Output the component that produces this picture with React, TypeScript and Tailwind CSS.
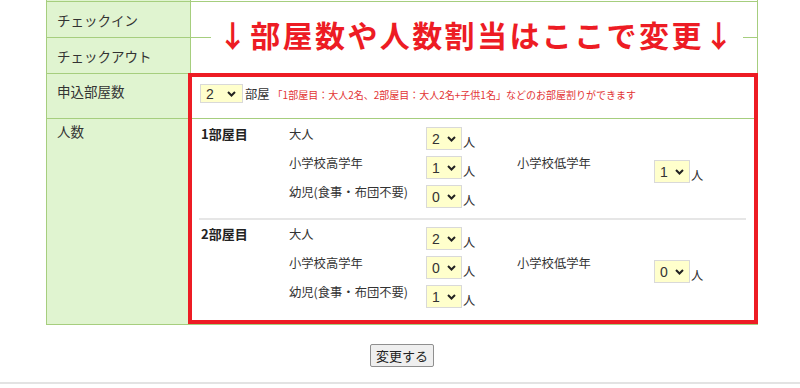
import React from "react";

const font = { fontFamily: '"Noto Sans CJK JP", "Noto Sans", sans-serif' };

type SelProps = { value: string; max: number; size: "room" | "small" };

const Sel: React.FC<SelProps> = ({ value, max, size }) => {
  const opts = Array.from({ length: max + 1 }, (_, i) => String(i));
  const box =
    size === "room"
      ? "w-[43px] h-[19px] pl-[5px]"
      : "w-[36px] h-[23px] pl-[5px]";
  const arrow = size === "room" ? "right-[7px]" : "right-[6px]";
  return (
    <span className="relative inline-flex shrink-0">
      <select
        defaultValue={value}
        className={`${box} appearance-none bg-[#ffffcc] border border-[#d9d9d9] text-[14px] leading-none text-[#333] outline-none`}
        style={{ fontFamily: '"Liberation Sans", Arial, sans-serif' }}
      >
        {opts.map((o) => (
          <option key={o} value={o}>
            {o}
          </option>
        ))}
      </select>
      <svg
        className={`pointer-events-none absolute top-1/2 -translate-y-1/2 ${arrow}`}
        width="9"
        height="6"
        viewBox="0 0 9 6"
      >
        <path d="M1 1 L4.5 4.5 L8 1" fill="none" stroke="#222" strokeWidth="2" />
      </svg>
    </span>
  );
};

interface RoomRow {
  label: string;
  value: string;
  extra?: { label: string; value: string };
}

const SelWithUnit: React.FC<{ value: string }> = ({ value }) => (
  <div className="flex items-end gap-[1px] mt-[2px]">
    <Sel value={value} max={9} size="small" />
    <span className="text-[12.3px] leading-[16px] text-[#333]">人</span>
  </div>
);

const RoomBlock: React.FC<{ title: string; rows: RoomRow[] }> = ({ title, rows }) => (
  <div className="flex pl-[10px]">
    <div className="w-[88px] text-[13px] font-bold leading-[18px] text-[#222]">{title}</div>
    <div className="flex flex-col">
      {rows.map((r) => (
        <div key={r.label} className="flex h-[29px]">
          <div className="w-[137px] text-[12.3px] leading-[18px] text-[#333]">{r.label}</div>
          <div className="w-[91px]">
            <SelWithUnit value={r.value} />
          </div>
          {r.extra && (
            <>
              <div className="w-[137px] text-[12.3px] leading-[18px] text-[#333]">
                {r.extra.label}
              </div>
              <SelWithUnit value={r.extra.value} />
            </>
          )}
        </div>
      ))}
    </div>
  </div>
);

const LabelCell: React.FC<{ children?: React.ReactNode; className?: string }> = ({
  children,
  className = "",
}) => (
  <div
    className={`w-[144px] shrink-0 bg-[#e0f4d0] border-r border-[#a6ce7e] pl-[10px] text-[13.5px] leading-[20px] text-[#333] ${className}`}
  >
    {children}
  </div>
);

export default function App() {
  return (
    <div className="w-[800px] h-[388px] bg-white overflow-hidden" style={font}>
      <div className="relative ml-[46px] w-[712px] border-x border-[#a6ce7e]">
        {/* cut-off row above */}
        <div className="flex h-[2px] border-b border-[#a6ce7e]">
          <LabelCell />
        </div>
        <div className="flex h-[36px] border-b border-[#a6ce7e]">
          <LabelCell className="flex items-center">チェックイン</LabelCell>
        </div>
        <div className="flex h-[36px] border-b border-[#a6ce7e]">
          <LabelCell className="flex items-center">チェックアウト</LabelCell>
        </div>
        <div className="flex h-[45px] border-b border-[#a6ce7e]">
          <LabelCell className="pt-[7px]">申込部屋数</LabelCell>
          <div className="flex items-baseline pl-[9px] pt-[10px]">
            <Sel value="2" max={5} size="room" />
            <span className="text-[12.3px] text-[#333] ml-[2px]">部屋</span>
            <span className="text-[10px] text-[#e23434] ml-[3px]">
              「1部屋目：大人2名、2部屋目：大人2名+子供1名」などのお部屋割りができます
            </span>
          </div>
        </div>
        <div className="flex h-[206px] border-b border-[#a6ce7e]">
          <LabelCell className="pt-[2px]">人数</LabelCell>
          <div className="flex-1 flex flex-col pt-[6px]">
            <RoomBlock
              title="1部屋目"
              rows={[
                { label: "大人", value: "2" },
                { label: "小学校高学年", value: "1", extra: { label: "小学校低学年", value: "1" } },
                { label: "幼児(食事・布団不要)", value: "0" },
              ]}
            />
            <div className="h-[2px] bg-[#e6e6e6] ml-[8px] mr-[11px] mt-[6px] mb-[5px]" />
            <RoomBlock
              title="2部屋目"
              rows={[
                { label: "大人", value: "2" },
                { label: "小学校高学年", value: "0", extra: { label: "小学校低学年", value: "0" } },
                { label: "幼児(食事・布団不要)", value: "1" },
              ]}
            />
          </div>
        </div>

        {/* annotation overlays */}
        <div className="absolute left-[164px] top-[15px] w-[532px] h-[38px] bg-white text-center whitespace-nowrap text-[30px] leading-[38px] font-bold tracking-[2.4px] text-[#ed1c24]">
          ↓部屋数や人数割当はここで変更↓
        </div>
        <div className="absolute left-[141px] top-[73px] w-[570px] h-[251px] border-[4px] border-[#ed1c24] pointer-events-none" />
      </div>

      <div className="ml-[46px] w-[712px] flex justify-center pt-[19px]">
        <button className="w-[64px] h-[23px] bg-[#efefef] border border-[#8f8f8f] rounded-[2px] text-[13px] leading-none text-[#222]">
          変更する
        </button>
      </div>
      <div className="mt-[15px] h-[2px] bg-[#e3e3e3]" />
    </div>
  );
}
